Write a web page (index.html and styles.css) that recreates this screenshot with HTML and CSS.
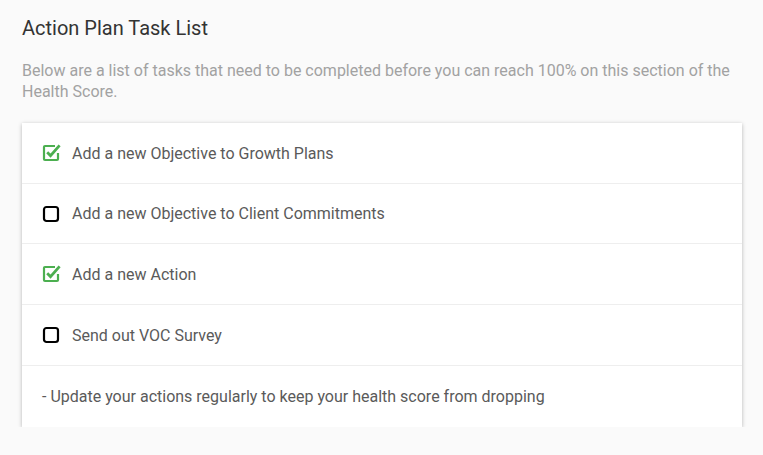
FILE: index.html
```html
<!DOCTYPE html>
<html>
<head>
<meta charset="utf-8">
<link rel="stylesheet" href="styles.css">
</head>
<body>
<h1 class="title">Action Plan Task List</h1>
<p class="desc">Below are a list of tasks that need to be completed before you can reach 100% on this section of the Health Score.</p>
<div class="card">
  <div class="row">
    <svg class="cb" width="18" height="18" viewBox="0 0 18 18"><path d="M13 2 H3 a1 1 0 0 0 -1 1 V15 a1 1 0 0 0 1 1 H15 a1 1 0 0 0 1 -1 V9" fill="none" stroke="#4caf50" stroke-width="2.2"/><path d="M5.2 8.3 L8.5 11.6 L17.6 1.4" fill="none" stroke="#4caf50" stroke-width="2.8"/></svg>
    <span>Add a new Objective to Growth Plans</span>
  </div>
  <div class="row short">
    <svg class="cb" width="18" height="18" viewBox="0 0 18 18"><rect x="2" y="2" width="14" height="14" rx="2.5" fill="none" stroke="#000" stroke-width="2.2"/></svg>
    <span>Add a new Objective to Client Commitments</span>
  </div>
  <div class="row">
    <svg class="cb" width="18" height="18" viewBox="0 0 18 18"><path d="M13 2 H3 a1 1 0 0 0 -1 1 V15 a1 1 0 0 0 1 1 H15 a1 1 0 0 0 1 -1 V9" fill="none" stroke="#4caf50" stroke-width="2.2"/><path d="M5.2 8.3 L8.5 11.6 L17.6 1.4" fill="none" stroke="#4caf50" stroke-width="2.8"/></svg>
    <span>Add a new Action</span>
  </div>
  <div class="row">
    <svg class="cb" width="18" height="18" viewBox="0 0 18 18"><rect x="2" y="2" width="14" height="14" rx="2.5" fill="none" stroke="#000" stroke-width="2.2"/></svg>
    <span>Send out VOC Survey</span>
  </div>
  <div class="row note">
    <span>- Update your actions regularly to keep your health score from dropping</span>
  </div>
</div>
</body>
</html>
```
FILE: styles.css
```css
html, body {
  margin: 0;
  background: #fafafa;
}
body {
  padding: 16px 21px 0 22px;
  font-family: Roboto, "Liberation Sans", sans-serif;
}
.title {
  margin: 0;
  font-size: 20px;
  font-weight: 400;
  line-height: 24px;
  color: #333;
}
.desc {
  margin: 20px 0 0;
  font-size: 16px;
  line-height: 21px;
  color: #a2a2a2;
}
.card {
  margin-top: 21px;
  background: #fff;
  box-shadow: 0 1px 4px rgba(0,0,0,0.28);
}
.row {
  display: flex;
  align-items: center;
  gap: 12px;
  height: 60px;
  padding: 0 20px;
  border-bottom: 1px solid #eeeeee;
  font-size: 16px;
  color: #5a5a5a;
}
.row.short {
  height: 59px;
}
.row.note {
  border-bottom: none;
  height: 61px;
}
.cb {
  flex: none;
  overflow: visible;
}
```
